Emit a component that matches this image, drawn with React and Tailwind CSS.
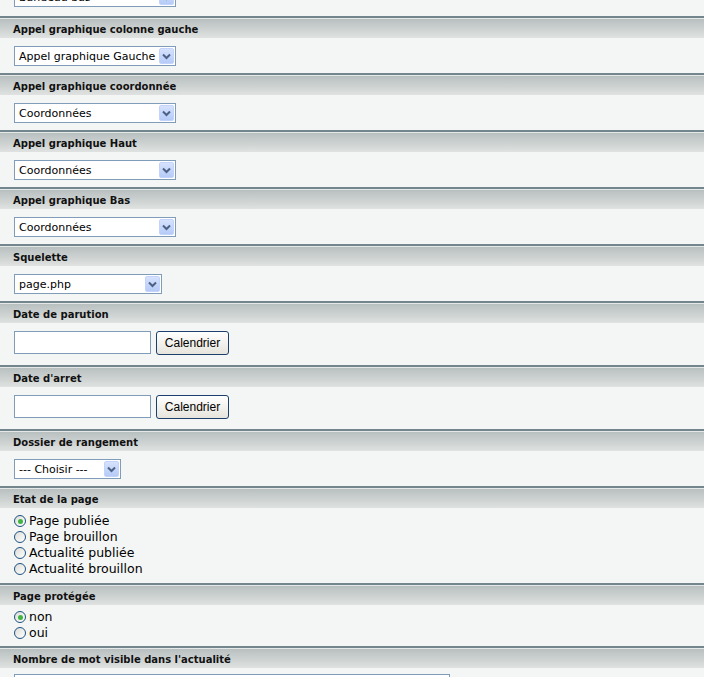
import React from 'react';

// En-tête de section : filet sombre, filet clair, dégradé
function SectionHeader({ title }) {
  return (
    <div className="flex flex-col">
      <div className="h-[2px] bg-[#74868d]" />
      <div className="h-[1px] bg-[#e4e8e8]" />
      <div className="h-[19px] flex items-center pl-[13px] pt-[1px] bg-gradient-to-b from-[#b8c0bf] to-[#dfe2e1] text-[10px] font-bold text-[#111] font-['DejaVu_Sans',sans-serif]">
        {title}
      </div>
    </div>
  );
}

function FakeSelect({ value, width }) {
  return (
    <div
      className="h-[20px] flex items-center justify-between bg-white border border-[#7f9db9] pl-[4px] pr-[1px] font-['DejaVu_Sans',sans-serif] text-[11px] text-black shrink-0"
      style={{ width }}
    >
      <span className="leading-none">{value}</span>
      <span className="w-[15px] h-[16px] flex items-center justify-center rounded-[2px] bg-gradient-to-b from-[#d6e2fd] to-[#b5cbf7] border border-[#c3d3fd]">
        <svg width="9" height="7" viewBox="0 0 9 7">
          <path d="M1 1.5 L4.5 5 L8 1.5" fill="none" stroke="#4d6185" strokeWidth="2" />
        </svg>
      </span>
    </div>
  );
}

function DateField() {
  return (
    <div className="flex items-start gap-[5px] pt-[8px] pb-[10px] pl-[14px]">
      <div className="w-[137px] h-[23px] bg-white border border-[#7f9db9]" />
      <button className="w-[73px] h-[24px] rounded-[3px] border border-[#1c3f6e] bg-gradient-to-b from-white to-[#e6e4dc] text-[12px] text-black font-['Liberation_Sans',Arial,sans-serif]">
        Calendrier
      </button>
    </div>
  );
}

function Radio({ label, checked }) {
  return (
    <div className="h-[16px] flex items-center gap-[3px] pl-[14px]">
      <span className="w-[12px] h-[12px] rounded-full border border-[#1d5281] bg-gradient-to-br from-[#dcdcd7] to-white flex items-center justify-center">
        {checked && <span className="w-[5px] h-[5px] rounded-full bg-[#3fb53f]" />}
      </span>
      <span className="text-[12.5px] text-black font-['DejaVu_Sans',sans-serif] leading-none">{label}</span>
    </div>
  );
}

function SelectSection({ title, value, width }) {
  return (
    <>
      <SectionHeader title={title} />
      <div className="h-[35px] pt-[8px] pl-[14px]">
        <FakeSelect value={value} width={width} />
      </div>
    </>
  );
}

export default function App() {
  return (
    <div className="w-[704px] h-[677px] overflow-hidden bg-[#f4f6f5]">
      {/* sélect coupé en haut */}
      <div className="h-[16px] flex items-end overflow-hidden pb-[9px] pl-[14px]">
        <FakeSelect value="Bandeau bas" width={162} />
      </div>

      <SelectSection title="Appel graphique colonne gauche" value="Appel graphique Gauche" width={162} />
      <SelectSection title="Appel graphique coordonnée" value="Coordonnées" width={162} />
      <SelectSection title="Appel graphique Haut" value="Coordonnées" width={162} />
      <SelectSection title="Appel graphique Bas" value="Coordonnées" width={162} />
      <SelectSection title="Squelette" value="page.php" width={148} />

      <SectionHeader title="Date de parution" />
      <DateField />

      <SectionHeader title="Date d'arret" />
      <DateField />

      <SelectSection title="Dossier de rangement" value="--- Choisir ---" width={107} />

      <SectionHeader title="Etat de la page" />
      <div className="h-[75px] pt-[5px]">
        <Radio label="Page publiée" checked />
        <Radio label="Page brouillon" />
        <Radio label="Actualité publiée" />
        <Radio label="Actualité brouillon" />
      </div>

      <SectionHeader title="Page protégée" />
      <div className="h-[41px] pt-[4px]">
        <Radio label="non" checked />
        <Radio label="oui" />
      </div>

      <SectionHeader title="Nombre de mot visible dans l'actualité" />
      <div className="pt-[6px] pl-[14px]">
        <div className="w-[436px] h-[23px] bg-white border border-[#7f9db9]" />
      </div>
    </div>
  );
}
